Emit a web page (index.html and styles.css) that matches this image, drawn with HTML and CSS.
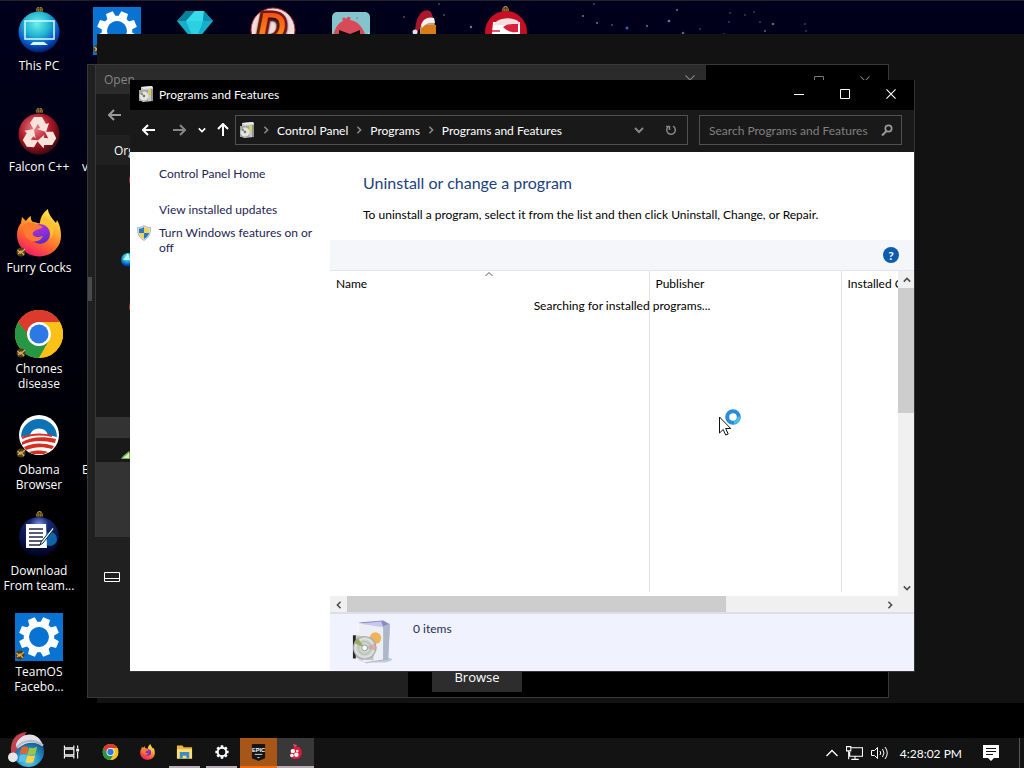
FILE: index.html
```html
<!DOCTYPE html>
<html lang="en">
<head>
    <meta charset="UTF-8">
    <meta name="viewport" content="width=device-width, initial-scale=1.0">
    <title>Programs and Features</title>
    <link rel="stylesheet" href="styles.css">
</head>
<body>
    <!-- shared icon shapes -->
    <svg class="defs" aria-hidden="true">
        <defs>
            <radialGradient id="g-blue" cx=".45" cy=".3" r=".75"><stop offset="0" stop-color="#6ff0ee"/><stop offset=".4" stop-color="#22b5d0"/><stop offset=".7" stop-color="#0755c8"/><stop offset="1" stop-color="#020a48"/></radialGradient>
            <radialGradient id="g-red" cx=".4" cy=".35" r=".7"><stop offset="0" stop-color="#ee8288"/><stop offset=".55" stop-color="#ad1829"/><stop offset="1" stop-color="#35060c"/></radialGradient>
            <radialGradient id="g-navy" cx=".5" cy=".2" r=".8"><stop offset="0" stop-color="#8796df"/><stop offset=".3" stop-color="#152777"/><stop offset="1" stop-color="#00001c"/></radialGradient>
            <linearGradient id="g-fox" x1=".8" y1="0" x2=".3" y2="1"><stop offset="0" stop-color="#fff44f"/><stop offset=".35" stop-color="#ffb02e"/><stop offset=".65" stop-color="#ff6a2c"/><stop offset="1" stop-color="#f5156c"/></linearGradient>
            <linearGradient id="g-globe" x1=".3" y1="0" x2=".6" y2="1"><stop offset="0" stop-color="#b833e1"/><stop offset="1" stop-color="#592acb"/></linearGradient>
            <linearGradient id="g-box" x1="0" y1="0" x2="1" y2="1"><stop offset="0" stop-color="#ffffff"/><stop offset="1" stop-color="#9ba5bc"/></linearGradient>
            <radialGradient id="g-disc"><stop offset="0" stop-color="#ffffff"/><stop offset=".55" stop-color="#b9c4b5"/><stop offset=".8" stop-color="#e6e4e6"/><stop offset="1" stop-color="#979c9c"/></radialGradient>
            <linearGradient id="g-d" x1="0" y1="0" x2="0" y2="1"><stop offset="0" stop-color="#f0400f"/><stop offset="1" stop-color="#ffa51e"/></linearGradient>
            <radialGradient id="g-orb" cx=".5" cy=".8" r=".8"><stop offset="0" stop-color="#5fd8f5"/><stop offset=".5" stop-color="#2186bd"/><stop offset="1" stop-color="#0c3c66"/></radialGradient>
        </defs>
        <symbol id="cap" viewBox="0 0 10 7"><path d="M1 7V3.500h8V7z" fill="#93702c"/><path d="M3 3.500a2 2 0 0 1 4 0" fill="none" stroke="#c19b4c" stroke-width="1.300"/><path d="M2.500 4v3M5 4v3M7.500 4v3" stroke="#3e2b10" stroke-width=".7"/></symbol>
        <symbol id="badge" viewBox="0 0 10 10"><circle cx="5" cy="5" r="4.500" fill="#4d3d1c"/><path d="M1.500 3l3 3L9 2M2 7l3-3 3 4" fill="none" stroke="#d5ad55" stroke-width="1.300"/></symbol>
        <symbol id="gear" viewBox="0 0 40 40"><g fill="#fff"><path id="tooth" d="M16.500 1h7l1 8h-9z"/><use href="#tooth" transform="rotate(45 20 20)"/><use href="#tooth" transform="rotate(90 20 20)"/><use href="#tooth" transform="rotate(135 20 20)"/><use href="#tooth" transform="rotate(180 20 20)"/><use href="#tooth" transform="rotate(225 20 20)"/><use href="#tooth" transform="rotate(270 20 20)"/><use href="#tooth" transform="rotate(315 20 20)"/></g><circle cx="20" cy="20" r="12" fill="none" stroke="#fff" stroke-width="5"/></symbol>
        <symbol id="tile-gear" viewBox="0 0 48 48"><path d="M0 0h48v48H0z" fill="#0873d2"/><g transform="rotate(22.500 24 24)"><use href="#gear" x="3" y="3" width="42" height="42"/></g><use href="#badge" x="0" y="37" width="10" height="10"/></symbol>
        <symbol id="chrome" viewBox="0 0 48 48"><circle cx="24" cy="24" r="24" fill="#fbc116"/><path d="M24 24 3.200 12A24 24 0 0 1 44.800 12H24z" fill="#dd3a2e"/><path d="M3.200 12A24 24 0 0 0 24 48l10.400-18L24 24 13.600 30z" fill="#269845"/><path d="M3.200 12 13.600 30 24 24 24 12z" fill="#dd3a2e"/><path d="M3.200 12 13.600 30 24 36 18 30z" fill="#269845"/><path d="M24 12h20.800A24 24 0 0 1 24 48l10.400-18z" fill="#fbc116"/><circle cx="24" cy="24" r="12" fill="#fff"/><circle cx="24" cy="24" r="9.500" fill="#2c78e4"/></symbol>
        <symbol id="firefox" viewBox="0 0 48 48"><path d="M46 27c0 12-10 20.500-22 20.500S2 38 2 26c0-5 1.500-9 4-12l1-6 4 4c2-3 3-4 5-5-.5 3 .5 5 2 6 3 0 5 1 7 2 0-7 3-11 8-15 0 5 4 9 8 14l1-3c3 5 4 10 4 16z" fill="url(#g-fox)"/><circle cx="25" cy="25" r="10" fill="url(#g-globe)"/><path d="M10 15c4-2 8-2 12 1 4 0 6 2 5 3l-6 2c-3 2-4 3-3 5 3 3 6 2 10 1-2 5-8 7-13 4-6-3-8-9-5-16z" fill="#ff7a2e"/><path d="M24 15c7-1 14 4 11 15 5-6 5-14-1-19l-5-3z" fill="#ffc233"/></symbol>
        <symbol id="software" viewBox="0 0 44 48"><ellipse cx="30" cy="42" rx="13" ry="3" fill="#c5cad8"/><path d="M8 4 34 2l7 4-2 36-22 4L8 42z" fill="url(#g-box)"/><path d="M8 4 34 2l7 4-7 5z" fill="#8d88ca"/><path d="M9 4l25 4v34l-21 3z" fill="#eceef6"/><path d="M34 8l7-3-2 36-5 2z" fill="#aeb6ca"/><path d="M9 5l23-2 2 6z" fill="#c7c5ec"/><circle cx="26" cy="20" r="6" fill="#efb45a"/><path d="M3 17v24h3V17z" fill="#242424"/><path d="M6 17l18 3v23l-18-3z" fill="#b7bcc0" opacity=".8"/><circle cx="15" cy="30" r="12" fill="url(#g-disc)"/><path d="M15 30 4 25a12 12 0 0 1 4-5z" fill="#98ac66"/><path d="M15 30l11-5a12 12 0 0 1 1 8z" fill="#cf9a9a" opacity=".6"/><circle cx="15" cy="30" r="3" fill="#f9f9f9" stroke="#929a9a"/></symbol>
        <symbol id="software-small" viewBox="0 0 16 16"><path d="M3 1l11-1 1 2v13l-10 1-2-1z" fill="#c6c6c0"/><path d="M3 1l11-1 1 2-9 1z" fill="#e9e9f0"/><path d="M13 3h2v12h-2z" fill="#8f9298"/><path d="M9 4h4v5H9z" fill="#d7cf52"/><path d="M1 4h9v11H1z" fill="#a2a5a2"/><circle cx="6" cy="10" r="4.500" fill="#e3e4df"/><path d="M6 10 2 8l2-2z" fill="#7d8a6b"/><circle cx="6" cy="10" r="1.300" fill="#777"/></symbol>
        <symbol id="shield" viewBox="0 0 16 16"><path d="M8 .5c2 1.500 4 2 6.500 2 .3 6-1.500 10-6.500 13C3 12.500 1.200 8.500 1.500 2.500 4 2.500 6 2 8 .5z" fill="#dbe0e7" stroke="#8796a8" stroke-width=".6"/><path d="M8 2C6.500 3 5 3.500 3 3.700V8h5z" fill="#2c77c4"/><path d="M8 2c1.500 1 3 1.500 5 1.700V8H8z" fill="#f2d34c"/><path d="M3 8h5v6C5 12.300 3.500 10.500 3 8z" fill="#f2d34c"/><path d="M13 8H8v6c3-1.700 4.500-3.500 5-6z" fill="#2c77c4"/></symbol>
        <symbol id="ornament-blue" viewBox="0 0 48 48"><use href="#cap" x="20" y="-2" width="9" height="7"/><circle cx="24" cy="25" r="20.500" fill="url(#g-blue)"/><path d="M10 14h29v18H10z" fill="none" stroke="#d3fbff" stroke-width="1.500"/><path d="M18 35h11l4 3H15z" fill="#d9f7ff"/></symbol>
        <symbol id="ornament-red" viewBox="0 0 48 48"><use href="#cap" x="20" y="-2" width="9" height="7"/><circle cx="24" cy="26" r="20.500" fill="url(#g-red)"/><g fill="#f6e4da"><path id="arrow-r" d="M15 15 19 9h8l4 7 3-1-3 9-9-3 3-1-2-4-4 6z"/><use href="#arrow-r" transform="rotate(120 24 26)"/><use href="#arrow-r" transform="rotate(240 24 26)"/></g></symbol>
        <symbol id="back" viewBox="0 0 14 12"><path d="M13 6H1.500M6 1 1 6l5 5" fill="none" stroke="currentColor" stroke-width="2"/></symbol>
        <symbol id="chev" viewBox="0 0 10 10"><path d="M1 3l4 4 4-4" fill="none" stroke="currentColor" stroke-width="2"/></symbol>
        <symbol id="max" viewBox="0 0 10 10"><path d="M.5.5h9v9h-9z" fill="none" stroke="currentColor"/></symbol>
        <symbol id="close" viewBox="0 0 11 11"><path d="M.5.500l10 10M10.500.5l-10 10" fill="none" stroke="currentColor" stroke-width="1.200"/></symbol>
    </svg>

    <main class="desktop">
        <svg class="stars" viewBox="0 0 340 40" aria-hidden="true">
            <g fill="#6f76a5"><circle cx="99" cy="3" r=".8"/><circle cx="64" cy="16" r=".8"/><circle cx="17" cy="17" r=".8"/><circle cx="243" cy="15" r="1"/><circle cx="257" cy="22" r="1"/><circle cx="272" cy="24" r=".8"/><circle cx="104" cy="14" r=".8"/><circle cx="131" cy="26" r="1.200"/><circle cx="287" cy="27" r="1.500" fill="#4458c5"/><circle cx="307" cy="25" r="1"/><circle cx="329" cy="20" r="1.300"/><circle cx="337" cy="9" r="1"/><circle cx="254" cy="3" r=".8"/></g>
        </svg>
        <svg class="stars stars-right" viewBox="0 0 340 40" aria-hidden="true">
            <g fill="#5c6188"><circle cx="3" cy="32" r="1.300"/><circle cx="20" cy="28" r=".8"/><circle cx="50" cy="12" r=".8"/><circle cx="65" cy="14" r=".8"/><circle cx="74" cy="11" r=".8"/><circle cx="49" cy="21" r=".8"/><circle cx="80" cy="21" r=".8"/><circle cx="93" cy="23" r="1.300"/><circle cx="85" cy="30" r="1"/><circle cx="125" cy="23" r=".8"/><circle cx="126" cy="30" r=".8"/><circle cx="44" cy="33" r=".8"/></g>
        </svg>

        <div class="shortcuts">
            <a class="shortcut" href="#"><svg viewBox="0 0 48 48"><use href="#ornament-blue"/></svg><span>This PC</span></a>
            <a class="shortcut" href="#"><svg viewBox="0 0 48 48"><use href="#ornament-red"/></svg><span>Falcon C++</span></a>
            <a class="shortcut" href="#"><svg viewBox="0 0 48 48"><use href="#firefox"/><use href="#badge" x="1" y="38" width="10" height="10"/></svg><span>Furry Cocks</span></a>
            <a class="shortcut" href="#"><svg viewBox="0 0 48 48"><use href="#chrome"/><use href="#badge" x="1" y="38" width="10" height="10"/></svg><span>Chrones disease</span></a>
            <a class="shortcut" href="#">
                <svg viewBox="0 0 48 48"><circle cx="24" cy="24" r="20" fill="#fff"/><path d="M6 26a18 18 0 1 1 36 0l-9-2a9.500 9.500 0 0 0-18 0z" fill="#0b73b5"/><path d="M7 31c8-5 21-6 34-3l-1 4c-12-3-23-3-33 2zM9 36c8-4 18-5 30-1l-2 3c-10-3-18-2-26 1zM14 41c6-2 13-2 19 0l-4 2H18z" fill="#d62e20"/><path d="M7 27c7-3 17-5 30-2" fill="none" stroke="#d62e20" stroke-width="2"/><use href="#badge" x="1" y="37" width="10" height="10"/></svg>
                <span>Obama Browser</span>
            </a>
            <a class="shortcut" href="#">
                <svg viewBox="0 0 48 48"><use href="#cap" x="20" y="-2" width="9" height="7"/><circle cx="24" cy="25" r="20" fill="url(#g-navy)"/><circle cx="35" cy="27" r="7" fill="#1187cf" opacity=".7"/><path d="M11 12h20l1 24H11z" fill="#fff"/><path d="M14 17h14M14 21h14M14 25h14M14 29h14M14 33h11" stroke="#202a45" stroke-width="1.500"/><path d="M38 15 26 30l-1 3 3-2 11-14z" fill="#e7fff0" stroke="#102440"/></svg>
                <span>Download From team...</span>
            </a>
            <a class="shortcut" href="#"><svg viewBox="0 0 48 48"><use href="#tile-gear"/></svg><span>TeamOS Facebo...</span></a>

            <a class="shortcut" href="#"><svg viewBox="0 0 48 48"><use href="#tile-gear"/></svg></a>
            <a class="shortcut cut r2" href="#"><span>v</span></a>
            <a class="shortcut cut r5" href="#"><span>E</span></a>

            <a class="shortcut c3" href="#"><svg viewBox="0 0 48 48"><path d="M15 4h18l9 10-18 22L6 14z" fill="#14afca"/><path d="M15 4h9l-9 10H6z" fill="#0c7f9d"/><path d="M24 4h9l-1 10H15z" fill="#37dce9"/><path d="M33 4l9 10H32z" fill="#0a92b0"/><path d="M15 14h17l-8 22z" fill="#2bd0e2"/></svg></a>
            <a class="shortcut c4" href="#"><svg viewBox="0 0 48 48"><circle cx="24" cy="23" r="22" fill="#f2dcdc" stroke="#a93035"/><text class="logo-d" x="8" y="34">D</text></svg></a>
            <a class="shortcut c5" href="#"><svg viewBox="0 0 48 48"><rect x="5" y="5" width="38" height="40" rx="5" fill="#86c4cd"/><path d="M6 30c2-11 7-15 10-16-2-3 1-5 3-2 2-4 6-2 4 1 8 1 14 8 16 18l-2 12H8z" fill="#d84a58"/><path d="M12 23l11 4 10-4v6l-10-1-11 1z" fill="#130c0c"/><path d="M22 30l5 5h-9z" fill="#e9ad22"/><path d="M42 26c-4 2-6 4-7 9h8z" fill="#eee"/></svg></a>
            <a class="shortcut c6" href="#"><svg viewBox="0 0 48 48"><path d="M15 12h14l3 22H15z" fill="#b9a58c"/><path d="M17 18h14v9H15z" fill="#d87c19"/><path d="M10 26C10 8 19-1 26 5l3 8-11 3-6 10z" fill="#a8172b"/><path d="M16 18c2-6 7-9 13-7l1 5c-6-1-9 0-13 5z" fill="#f6f2ee"/><circle cx="10" cy="25" r="2.500" fill="#d3e6ea"/></svg></a>
            <a class="shortcut c7" href="#"><svg viewBox="0 0 48 48"><use href="#cap" x="18" y="-2" width="9" height="7"/><circle cx="23" cy="25" r="21" fill="#c90f25"/><path d="M10 15h27v22H8z" fill="#fff"/><path d="M14 14c6-3 14-4 21 0l2 4H10z" fill="#f3dfe0"/><path d="M20 20c4-3 8-3 15-3v8c-7 1-11-1-15-5z" fill="#d9203f"/><path d="M9 24h8" stroke="#d9203f" stroke-width="1.500"/></svg></a>
        </div>

        <!-- window at the back -->
        <section class="backdrop" aria-label="Background window"></section>

        <section class="launcher" aria-label="Launcher">
            <div class="launcher-side">
                <svg class="keyboard" viewBox="0 0 16 10"><path d="M.5.5h15v9H.5zM.5 6.500h15" fill="none" stroke="#fff"/></svg>
            </div>
            <div class="launcher-main">
                <div class="launcher-title">
                    <svg viewBox="0 0 10 10"><use href="#max"/></svg>
                    <svg viewBox="0 0 11 11"><use href="#close"/></svg>
                </div>
                <button class="browse" type="button">Browse</button>
            </div>
            <span class="side-thumb"></span>

            <div class="open-dialog">
                <div class="open-title"><span>Open</span><svg viewBox="0 0 10 10"><use href="#close"/></svg></div>
                <div class="open-nav"><svg viewBox="0 0 14 12"><use href="#back"/></svg></div>
                <div class="open-tools">Organize</div>
                <div class="open-tree">
                    <svg viewBox="0 0 16 16"><circle cx="9" cy="8" r="8" fill="#c33243"/></svg>
                    <svg class="near" viewBox="0 0 16 16"><circle cx="8" cy="9" r="7" fill="url(#g-blue)"/><path d="M3 9 8 2l2 7z" fill="#bff6ee"/></svg>
                    <svg viewBox="0 0 16 16"><circle cx="9" cy="8" r="8" fill="#bd3b24"/></svg>
                    <div class="tree-active"></div>
                    <svg class="near last" viewBox="0 0 16 16"><path d="M1 13C3 9 6 8 9 5l5 8z" fill="#79b34f"/><path d="M3 12l6-5v5z" fill="#d8efc5"/></svg>
                </div>
                <div class="open-footer"></div>
            </div>
        </section>

        <section class="window" aria-label="Programs and Features">
            <header class="titlebar">
                <svg class="app-icon" viewBox="0 0 16 16"><use href="#software-small"/></svg>
                <span>Programs and Features</span>
                <div class="controls">
                    <button type="button" aria-label="Minimize"><svg viewBox="0 0 10 10"><path d="M0 5.500h10" stroke="#fff"/></svg></button>
                    <button type="button" aria-label="Maximize"><svg viewBox="0 0 10 10"><use href="#max"/></svg></button>
                    <button type="button" aria-label="Close"><svg viewBox="0 0 11 11"><use href="#close"/></svg></button>
                </div>
            </header>

            <nav class="navbar">
                <button type="button" aria-label="Back"><svg viewBox="0 0 14 12"><use href="#back"/></svg></button>
                <button type="button" class="forward" aria-label="Forward"><svg viewBox="0 0 14 12"><use href="#back"/></svg></button>
                <button type="button" class="recent" aria-label="Recent locations"><svg viewBox="0 0 10 10"><use href="#chev"/></svg></button>
                <button type="button" class="up" aria-label="Up"><svg viewBox="0 0 14 12"><use href="#back"/></svg></button>
                <div class="address">
                    <svg class="app-icon" viewBox="0 0 16 16"><use href="#software-small"/></svg>
                    <svg class="sep" viewBox="0 0 10 10"><use href="#chev"/></svg>
                    <a href="#">Control Panel</a>
                    <svg class="sep" viewBox="0 0 10 10"><use href="#chev"/></svg>
                    <a href="#">Programs</a>
                    <svg class="sep" viewBox="0 0 10 10"><use href="#chev"/></svg>
                    <a href="#">Programs and Features</a>
                    <button type="button" class="drop" aria-label="Previous locations"><svg viewBox="0 0 10 10"><use href="#chev"/></svg></button>
                    <button type="button" aria-label="Refresh"><svg class="refresh" viewBox="0 0 12 12"><path d="M3 3a4.300 4.300 0 1 0 5-.8M1 2.500h3.500V6" fill="none" stroke="currentColor" stroke-width="1.500"/></svg></button>
                </div>
                <div class="search">
                    <input type="search" aria-label="Search Programs and Features" placeholder="Search Programs and Features">
                    <svg viewBox="0 0 12 12"><circle cx="7.500" cy="4.500" r="3.200" fill="none" stroke="currentColor" stroke-width="1.700"/><path d="M5.500 7 1 11.500" stroke="currentColor" stroke-width="2"/></svg>
                </div>
            </nav>

            <div class="content">
                <aside class="tasks">
                    <a class="home" href="#">Control Panel Home</a>
                    <a href="#">View installed updates</a>
                    <a href="#"><svg viewBox="0 0 16 16"><use href="#shield"/></svg>Turn Windows features on or off</a>
                </aside>

                <div class="programs">
                    <div class="intro">
                        <h1>Uninstall or change a program</h1>
                        <p>To uninstall a program, select it from the list and then click Uninstall, Change, or Repair.</p>
                    </div>
                    <div class="toolbar"><button type="button" class="help" aria-label="Help">?</button></div>
                    <div class="list">
                        <div class="list-view">
                            <table>
                                <thead>
                                    <tr><th class="col-name">Name<svg viewBox="0 0 10 10"><path d="M1.500 7 5 3.500 8.500 7" fill="none" stroke="#555"/></svg></th><th class="col-publisher">Publisher</th><th>Installed On</th></tr>
                                </thead>
                                <tbody>
                                    <tr><td></td><td></td><td></td></tr>
                                </tbody>
                            </table>
                        </div>
                        <div class="vscroll">
                            <button type="button" aria-label="Scroll up"><svg class="flip" viewBox="0 0 10 10"><use href="#chev"/></svg></button>
                            <div class="track"><div class="thumb"></div></div>
                            <button type="button" aria-label="Scroll down"><svg viewBox="0 0 10 10"><use href="#chev"/></svg></button>
                        </div>
                        <p class="searching">Searching for installed programs...</p>
                    </div>
                    <div class="hscroll">
                        <button type="button" aria-label="Scroll left"><svg class="west" viewBox="0 0 10 10"><use href="#chev"/></svg></button>
                        <div class="track"><div class="thumb"></div></div>
                        <button type="button" aria-label="Scroll right"><svg class="east" viewBox="0 0 10 10"><use href="#chev"/></svg></button>
                    </div>
                    <footer class="details">
                        <svg viewBox="0 0 44 48"><use href="#software"/></svg>
                        <span>0 items</span>
                    </footer>
                </div>
            </div>
        </section>

        <svg class="cursor" viewBox="0 0 24 28" aria-hidden="true"><circle cx="15" cy="9" r="5.800" fill="#fff" stroke="#2a8ed6" stroke-width="4"/><path d="M16 14.500a5.800 5.800 0 0 0 5-6" fill="none" stroke="#48bff0" stroke-width="3"/><path d="M1.500 9v16l3.700-3.500 2.500 5.500 2.500-1-2.500-5.500h5z" fill="#fff" stroke="#111"/></svg>
    </main>

    <footer class="taskbar">
        <button type="button" class="start" aria-label="Start">
            <svg viewBox="0 0 38 38"><circle cx="21" cy="21" r="16" fill="url(#g-orb)"/><path d="M14 17c3-2 5-1 7 0l-2 7c-3-1-5-1-7 0z" fill="#e0662a"/><path d="M22 17c3 1 5 1 8-1l-2 8c-3 1-5 1-8 0z" fill="#9cc544"/><path d="M12 25c3-1 5-1 7 0l-2 7c-2-1-4-1-6 0z" fill="#59bff0"/><path d="M20 25c3 1 5 1 8 0l-2 7c-3 1-5 1-8 0z" fill="#ffd23f"/><path d="M3 22C2 8 9 2 19 1l-6 12-6 10z" fill="#c04350"/><path d="M8 15C10 3 30-3 36 15c-8-4-17-5-26 3z" fill="#e2dfe6"/><path d="M9 17c6-8 18-9 27-2" fill="none" stroke="#b7bacb" stroke-width="2.500"/><circle cx="5" cy="27" r="5" fill="#e9e6ea"/></svg>
        </button>
        <button type="button" aria-label="Task view"><svg viewBox="0 0 18 16"><path d="M1.500 1v2.500h10V1M1.500 15v-2.500h10V15M1.500 5h10v6h-10zM15.500 1v3M15.500 8v7" fill="none" stroke="#fff" stroke-width="1.200"/><path d="M14 4.500h3v3h-3z" fill="#fff"/></svg></button>
        <button type="button" class="gap" aria-label="Chrome"><svg viewBox="0 0 48 48"><use href="#chrome"/></svg></button>
        <button type="button" aria-label="Firefox"><svg viewBox="0 0 48 48"><use href="#firefox"/></svg></button>
        <button type="button" class="running" aria-label="File Explorer"><svg viewBox="0 0 18 16"><path d="M1 1h6l1 2h9v12H1z" fill="#eab839"/><path d="M1 5h16v10H1z" fill="#ffdd75"/><path d="M4 15V8h10v7h-3v-3H7v3z" fill="#3b8dc9"/></svg></button>
        <button type="button" class="running" aria-label="Settings"><svg class="small" viewBox="0 0 40 40"><use href="#gear"/></svg></button>
        <button type="button" class="running epic" aria-label="Epic Games"><svg viewBox="0 0 18 20"><path d="M2 1h14v15l-7 3-7-3z" fill="#151515"/><text class="logo-epic" x="9" y="9">EPIC</text><path d="M5 12h8" stroke="#ddd"/><path d="M7 15h4l-2 1z" fill="#eee"/></svg></button>
        <button type="button" class="running active" aria-label="Falcon"><svg viewBox="0 0 18 18"><path d="M9 3c5-1 7 3 7 7s-3 7-7 7-6-2-6-5 1-7 6-9z" fill="#df1839"/><path d="M6 0l2 4 3-3z" fill="#e74c62"/><circle cx="6" cy="8" r="2.500" fill="#fff"/><circle cx="11" cy="8" r="1.500" fill="#ffdae0"/><circle cx="10" cy="12" r="2.500" fill="#fff"/><circle cx="5" cy="13" r="2" fill="#fff"/></svg></button>

        <div class="tray">
            <button type="button" aria-label="Show hidden icons"><svg class="caret" viewBox="0 0 12 8"><path d="M.5 7 6 1.500 11.500 7" fill="none" stroke="#fff" stroke-width="1.300"/></svg></button>
            <button type="button" aria-label="Network"><svg class="net" viewBox="0 0 16 14"><path d="M5 1.500h10.500v8H3.500v-4M.5.5h4v4h-4zM2.500 4.500v8M8.500 9.500v3M5 12.500h7" fill="none" stroke="#fff"/></svg></button>
            <button type="button" aria-label="Volume"><svg class="vol" viewBox="0 0 17 14"><path d="M.5 4.500h3l3-3v11l-3-3h-3zM9 5q1.500 2 0 4M11.500 3q3 4 0 8M14 1q4.500 6 0 12" fill="none" stroke="#fff"/></svg></button>
            <time>4:28:02 PM</time>
            <button type="button" class="notes" aria-label="Notifications"><svg viewBox="0 0 16 16"><path d="M0 0h16v13h-5l-3 3-3-3H0z" fill="#fff"/><path d="M3 3.500h10M3 6.500h10M3 9.500h7" stroke="#111"/></svg></button>
        </div>
    </footer>
</body>
</html>
```

FILE: styles.css
```css
* {
    box-sizing: border-box;
}
body {
    margin: 0;
    height: 100vh;
    display: flex;
    flex-direction: column;
    overflow: hidden;
    background: #000;
    color: #fff;
    font-family: Lato, "Open Sans", sans-serif;
    font-size: 12px;
    line-height: 15px;
}
svg {
    display: block;
    flex: none;
}
.defs {
    position: absolute;
    width: 0;
    height: 0;
}
a {
    color: inherit;
    text-decoration: none;
}
button {
    display: flex;
    align-items: center;
    justify-content: center;
    padding: 0;
    border: 0;
    background: none;
    color: inherit;
    font: inherit;
}

/* desktop */
.desktop {
    flex: 1;
    min-height: 0;
    position: relative;
    background: linear-gradient(#00001c, #00000d 40%, #000 75%);
    border-top: 1px solid #22222e;
}
.stars {
    position: absolute;
    left: 340px;
    top: 0;
    width: 340px;
    height: 40px;
}
.stars-right {
    left: 680px;
}
.shortcuts {
    display: grid;
    grid-template-columns: repeat(7, 78px);
    grid-template-rows: repeat(7, 101px);
    grid-auto-flow: column;
    padding-top: 6px;
}
.shortcut {
    display: flex;
    flex-direction: column;
    align-items: center;
    gap: 3px;
    font-family: "Open Sans", sans-serif;
    text-align: center;
    text-shadow: 0 1px 2px #000;
}
.shortcut svg {
    width: 48px;
    height: 48px;
    overflow: visible;
}
.shortcut span {
    width: 74px;
}
.cut {
    grid-column: 2;
    padding: 51px 0 0 4px;
    text-align: left;
}
.r2 { grid-row: 2; }
.r5 { grid-row: 5; }
.c3 { grid-area: 1 / 3; }
.c4 { grid-area: 1 / 4; }
.c5 { grid-area: 1 / 5; }
.c6 { grid-area: 1 / 6; }
.c7 { grid-area: 1 / 7; }
.logo-d {
    font: italic bold 40px "Liberation Sans", sans-serif;
    fill: url(#g-d);
    stroke: #7c1714;
    stroke-width: 5px;
    paint-order: stroke;
}

/* windows behind */
.backdrop {
    position: absolute;
    left: 97px;
    top: 33px;
    right: 0;
    bottom: 35px;
    background: #121212;
}
.launcher {
    position: absolute;
    left: 87px;
    top: 63px;
    right: 135px;
    bottom: 40px;
    display: flex;
    border: 1px solid #383838;
    background: #000;
}
.launcher-side {
    width: 320px;
    display: flex;
    align-items: flex-end;
    padding: 0 16px 115px;
    background: #202020;
}
.keyboard {
    width: 16px;
    height: 10px;
}
.launcher-main {
    flex: 1;
    display: flex;
    flex-direction: column;
    justify-content: space-between;
    padding: 0 18px 5px 24px;
}
.launcher-title {
    display: flex;
    justify-content: flex-end;
    gap: 36px;
    padding-top: 11px;
    color: #777;
}
.launcher-title svg {
    width: 10px;
    height: 10px;
}
.browse {
    width: 90px;
    height: 30px;
    background: #2d2d2d;
    font-family: "Open Sans", sans-serif;
    font-size: 13px;
}
.side-thumb {
    position: absolute;
    left: 0;
    top: 212px;
    width: 4px;
    height: 24px;
    background: #4a4a4a;
}
.open-dialog {
    position: absolute;
    left: 7px;
    top: 0;
    right: 182px;
    bottom: 160px;
    display: flex;
    flex-direction: column;
    border-left: 1px solid #383838;
    background: #191919;
}
.open-title {
    display: flex;
    justify-content: space-between;
    align-items: center;
    height: 30px;
    padding: 0 11px 0 8px;
    background: #2b2b2b;
    color: #858585;
    font-family: "Open Sans", sans-serif;
}
.open-title svg {
    width: 10px;
    height: 10px;
}
.open-nav {
    display: flex;
    align-items: center;
    height: 42px;
    padding-left: 12px;
    color: #999;
}
.open-nav svg {
    width: 14px;
    height: 12px;
}
.open-tools {
    height: 30px;
    padding: 8px 18px;
    background: #202020;
    font-family: "Open Sans", sans-serif;
}
.open-tree {
    flex: 1;
    display: flex;
    flex-direction: column;
    padding-top: 7px;
}
.open-tree svg {
    width: 16px;
    height: 16px;
    margin-left: 32px;
}
.open-tree .near {
    margin: 63px 0 32px 24px;
}
.tree-active {
    height: 21px;
    margin-top: 102px;
    background: #333;
}
.open-tree .last {
    margin: 8px 0 0 24px;
}
.open-footer {
    height: 77px;
    background: #333;
}

/* programs and features */
.window {
    position: absolute;
    left: 130px;
    top: 79px;
    right: 109px;
    bottom: 66px;
    display: flex;
    flex-direction: column;
    border: solid #333;
    border-width: 0 1px 1px 0;
    background: #fff;
}
.titlebar {
    display: flex;
    align-items: center;
    gap: 5px;
    height: 30px;
    padding: 0 0 2px 8px;
    background: #000;
}
.app-icon {
    width: 16px;
    height: 16px;
}
.controls {
    display: flex;
    margin-left: auto;
}
.controls button {
    width: 46px;
    height: 28px;
}
.controls svg {
    width: 10px;
    height: 10px;
}
.navbar {
    display: flex;
    align-items: center;
    height: 42px;
    padding: 0 12px 2px 4px;
    background: #191919;
}
.navbar button {
    width: 30px;
    height: 28px;
}
.navbar button svg {
    width: 14px;
    height: 12px;
}
.navbar .forward {
    color: #858585;
}
.forward svg {
    transform: rotate(180deg);
}
.up svg {
    transform: rotate(90deg);
}
.navbar .recent {
    width: 16px;
}
.navbar .recent svg {
    width: 8px;
    height: 8px;
}
.navbar .up {
    width: 25px;
}
.address {
    flex: 1;
    min-width: 0;
    display: flex;
    align-items: center;
    height: 30px;
    padding-left: 3px;
    border: 1px solid #505050;
    white-space: nowrap;
}
.sep {
    width: 8px;
    height: 8px;
    margin: 0 7px;
    color: #888;
    transform: rotate(-90deg);
}
.address button {
    width: 32px;
    color: #858585;
}
.address .drop {
    margin-left: auto;
}
.navbar .drop svg {
    width: 10px;
    height: 10px;
}
.search {
    display: flex;
    align-items: center;
    width: 203px;
    height: 30px;
    margin-left: 11px;
    padding: 0 8px 0 9px;
    border: 1px solid #505050;
    color: #999;
}
.search input {
    flex: 1;
    min-width: 0;
    padding: 0;
    border: 0;
    outline: 0;
    background: none;
    color: #fff;
    font: inherit;
}
.search input::placeholder {
    color: #808080;
}
.search svg {
    width: 12px;
    height: 12px;
}
.content {
    flex: 1;
    min-height: 0;
    display: flex;
}
.tasks {
    width: 200px;
    display: flex;
    flex-direction: column;
    gap: 8px;
    padding: 14px 10px 0 29px;
    color: #1e2352;
}
.tasks .home {
    margin-bottom: 13px;
}
.tasks svg {
    width: 16px;
    height: 16px;
    float: left;
    margin-left: -23px;
}
.programs {
    flex: 1;
    min-width: 0;
    display: flex;
    flex-direction: column;
}
.intro {
    height: 88px;
    padding: 20px 33px 0;
    color: #000;
}
.intro h1 {
    margin: 0 0 13px;
    color: #1c3f7d;
    font-size: 16px;
    font-weight: 400;
    line-height: 22px;
}
.intro p {
    margin: 0;
    white-space: nowrap;
}
.toolbar {
    display: flex;
    align-items: center;
    justify-content: flex-end;
    height: 31px;
    padding-right: 15px;
    border-bottom: 1px solid #e2e6ea;
    background: #f4f6f9;
}
.help {
    width: 16px;
    height: 16px;
    border-radius: 50%;
    background: #0a5cae;
    font-weight: 700;
}
.list {
    flex: 1;
    min-height: 0;
    position: relative;
    display: flex;
    color: #000;
}
.list-view {
    flex: 1;
    min-width: 0;
    overflow: hidden;
    padding-bottom: 4px;
}
table {
    width: 100%;
    height: 100%;
    table-layout: fixed;
    border-collapse: collapse;
}
th {
    position: relative;
    height: 24px;
    padding: 0 6px;
    overflow: hidden;
    font-weight: 400;
    text-align: left;
    white-space: nowrap;
}
th:last-child {
    padding-right: 0;
}
th + th,
td + td {
    border-left: 1px solid #e3e3e3;
}
.col-name {
    width: 319px;
}
.col-name svg {
    position: absolute;
    left: calc(50% - 5px);
    top: -2px;
    width: 10px;
    height: 10px;
}
.col-publisher {
    width: 192px;
}
.searching {
    position: absolute;
    left: 0;
    right: 0;
    top: 27px;
    margin: 0;
    text-align: center;
}
.vscroll,
.hscroll {
    display: flex;
    background: #f0f0f0;
    color: #505050;
}
.vscroll {
    flex-direction: column;
    width: 16px;
}
.hscroll {
    height: 16px;
    padding-right: 16px;
}
.vscroll button,
.hscroll button {
    width: 17px;
    height: 17px;
}
.vscroll svg,
.hscroll svg {
    width: 8px;
    height: 8px;
}
.flip {
    transform: rotate(180deg);
}
.west {
    transform: rotate(90deg);
}
.east {
    transform: rotate(-90deg);
}
.track {
    flex: 1;
}
.thumb {
    background: #cdcdcd;
}
.vscroll .thumb {
    height: 43%;
}
.hscroll .thumb {
    width: 71%;
    height: 16px;
}
.details {
    display: flex;
    gap: 20px;
    height: 59px;
    padding: 4px 20px;
    border-top: 2px solid #dcdeec;
    background: #f0f3fe;
    color: #26304f;
}
.details svg {
    width: 43px;
    height: 48px;
}
.details span {
    padding-top: 3px;
}
.cursor {
    position: absolute;
    left: 718px;
    top: 407px;
    width: 24px;
    height: 28px;
}

/* taskbar */
.taskbar {
    display: flex;
    height: 30px;
    background: #131313;
}
.taskbar > button {
    width: 37px;
    border-bottom: 2px solid transparent;
}
.taskbar > button svg {
    width: 17px;
    height: 16px;
}
.taskbar .start {
    width: 53px;
    border: 0;
    align-items: flex-end;
    position: relative;
}
.taskbar .start svg {
    width: 37px;
    height: 37px;
}
.taskbar .gap {
    margin-left: 2px;
}
.taskbar .small {
    width: 14px;
    height: 14px;
}
.taskbar .running {
    border-image: linear-gradient(90deg, transparent 12%, #b9adb5 12%, #b9adb5 88%, transparent 88%) 2;
}
.taskbar .epic {
    border-image: none;
    border-bottom-color: #f36d13;
    background: #a65717;
}
.taskbar .epic svg {
    height: 19px;
}
.logo-epic {
    font: bold 6px "Liberation Sans", sans-serif;
    text-anchor: middle;
    fill: #fff;
}
.taskbar .active {
    border-image: none;
    border-bottom-color: #b9adb5;
    background: #383838;
}
.tray {
    display: flex;
    align-items: center;
    gap: 8px;
    margin-left: auto;
    margin-right: 4px;
    padding-right: 20px;
    border-right: 1px solid #555;
}
.caret {
    width: 12px;
    height: 8px;
}
.net {
    width: 17px;
    height: 15px;
}
.vol {
    width: 17px;
    height: 14px;
}
.tray time {
    margin: 0 13px 0 4px;
}
.notes svg {
    width: 16px;
    height: 16px;
}
```
